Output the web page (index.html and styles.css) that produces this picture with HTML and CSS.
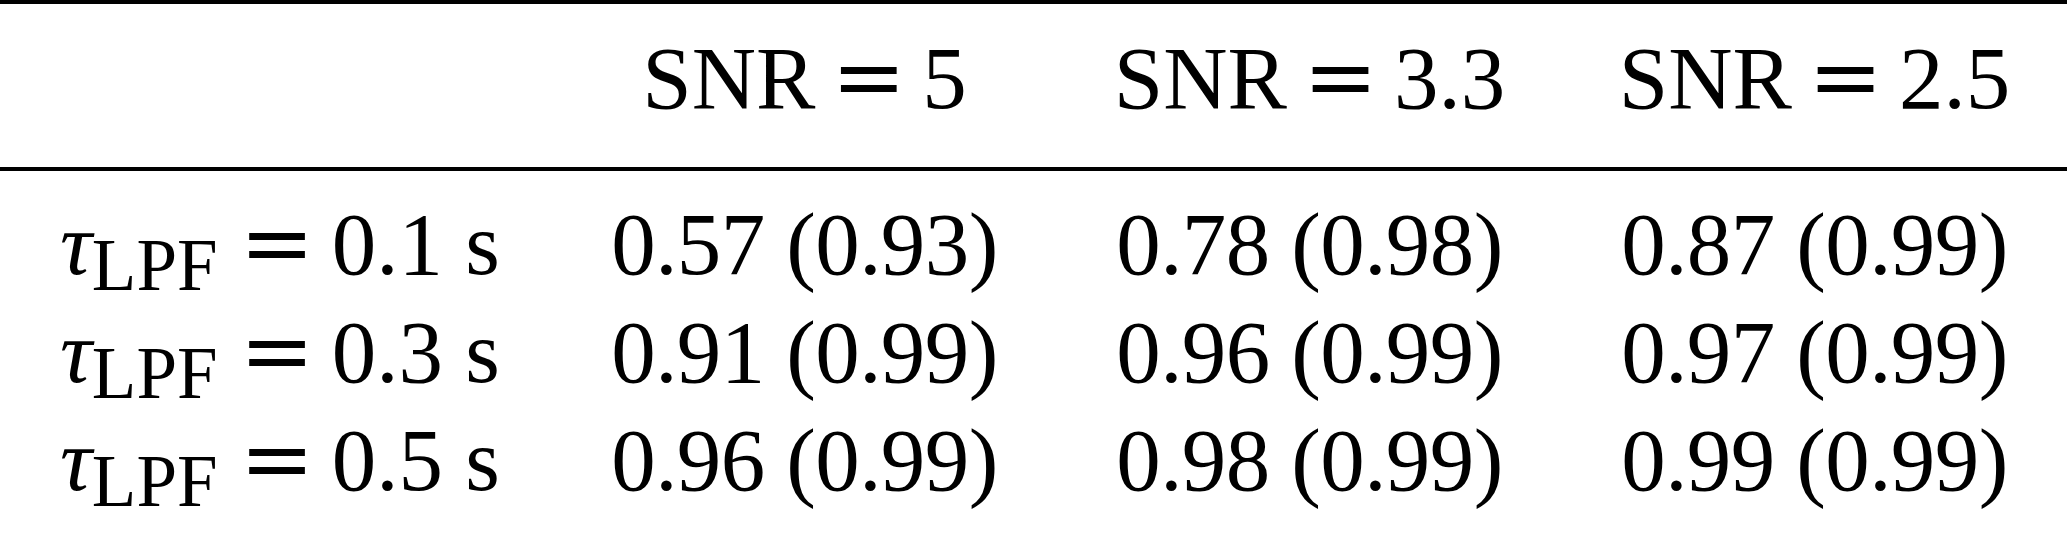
FILE: index.html
```html
<!DOCTYPE html>
<html lang="en">
<head>
	<meta charset="UTF-8">
	<title>SNR / LPF table</title>
	<link rel="stylesheet" href="styles.css">
</head>
<body>

<table class="res_tab">
	<colgroup>
		<col class="col_lbl">
		<col class="col_val">
		<col class="col_val">
		<col class="col_val">
	</colgroup>
	<thead>
		<tr>
			<th></th>
			<th>SNR <span class="eq">=</span> 5</th>
			<th>SNR <span class="eq">=</span> 3.3</th>
			<th>SNR <span class="eq">=</span> 2.5</th>
		</tr>
	</thead>
	<tbody>
		<tr>
			<td class="lbl"><i>τ</i><sub>LPF</sub> <span class="eq">=</span> 0.1 s</td>
			<td>0.57 (0.93)</td>
			<td>0.78 (0.98)</td>
			<td>0.87 (0.99)</td>
		</tr>
		<tr>
			<td class="lbl"><i>τ</i><sub>LPF</sub> <span class="eq">=</span> 0.3 s</td>
			<td>0.91 (0.99)</td>
			<td>0.96 (0.99)</td>
			<td>0.97 (0.99)</td>
		</tr>
		<tr>
			<td class="lbl"><i>τ</i><sub>LPF</sub> <span class="eq">=</span> 0.5 s</td>
			<td>0.96 (0.99)</td>
			<td>0.98 (0.99)</td>
			<td>0.99 (0.99)</td>
		</tr>
	</tbody>
</table>

</body>
</html>
```

FILE: styles.css
```css
*{margin:0; padding:0;}
body{ background:#fff; color:#000; font-family:"Liberation Serif","Times New Roman",serif; }

/*表格*/
.res_tab{ width:100%; table-layout:fixed; border-collapse:separate; border-spacing:0; font-size:89px; line-height:107px; border-top:4px solid #000; border-bottom:4px solid #000; }
.col_lbl{ width:552px; }
.col_val{ width:505px; }

.res_tab th{ font-weight:normal; text-align:center; padding:20px 0 35px; border-bottom:4px solid #000; }
.res_tab td{ text-align:center; white-space:nowrap; letter-spacing:-0.6px; }
.res_tab tbody tr:first-child td{ padding-top:19px; }
.res_tab tbody tr:last-child td{ padding-bottom:36px; }
.res_tab td.lbl{ text-align:left; padding-left:60px; letter-spacing:0; }

/*公式*/
.eq{ font-family:"DejaVu Serif",serif; margin:0 -6px; }
.lbl .eq{ margin:0 -5px 0 0; }
.res_tab sub{ font-size:0.82em; vertical-align:-15.6px; line-height:0; }
```
